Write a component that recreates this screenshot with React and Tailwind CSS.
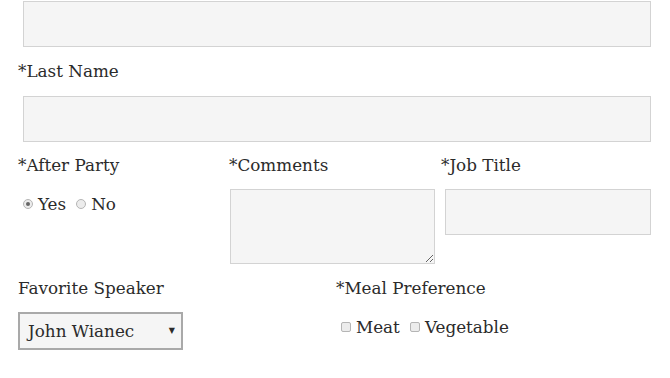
import React from 'react';

const inputCls = 'block h-[46px] bg-[#f5f5f5] border border-[#d3d3d3] outline-none';

function Radio({ checked }) {
  return (
    <span className="inline-flex items-center justify-center w-[10px] h-[10px] rounded-full border border-[#b5b5b5] bg-[#ececec]">
      {checked && <span className="w-[4px] h-[4px] rounded-full bg-[#666]" />}
    </span>
  );
}

function Check() {
  return <span className="inline-block w-[10px] h-[10px] rounded-[2px] border border-[#b5b5b5] bg-[#ececec]" />;
}

export default function App() {
  return (
    <div className="w-[670px] h-[378px] bg-white text-[#2b2b2b] text-[16.8px] leading-[20px] overflow-hidden" style={{ fontFamily: '"DejaVu Serif", serif' }}>
      <div className="pl-[18px] pr-[19px]">
        <input className={`${inputCls} ml-[5px] mt-[1px] w-[628px]`} />
        <div className="mt-[14px] h-[20px]">*Last Name</div>
        <input className={`${inputCls} ml-[5px] mt-[15px] w-[628px] h-[45px]`} />

        <div className="flex mt-[13px]">
          <div className="w-[211px]">
            <div className="h-[20px]">*After Party</div>
            <div className="flex items-center mt-[19px] ml-[5px] h-[20px]">
              <Radio checked />
              <span className="ml-[5px]">Yes</span>
              <span className="ml-[10px] flex items-center"><Radio /></span>
              <span className="ml-[5px]">No</span>
            </div>
          </div>
          <div className="w-[212px]">
            <div className="h-[20px]">*Comments</div>
            <textarea className="block mt-[14px] ml-[1px] w-[205px] h-[75px] bg-[#f5f5f5] border border-[#d3d3d3] outline-none resize" />
          </div>
          <div className="flex-1">
            <div className="h-[20px]">*Job Title</div>
            <input className={`${inputCls} mt-[14px] ml-[4px] w-[206px]`} />
          </div>
        </div>

        <div className="flex mt-[14px]">
          <div className="w-[318px]">
            <div className="h-[20px]">Favorite Speaker</div>
            <div className="mt-[14px] w-[165px] h-[38px] border-2 border-[#a9a9a9] bg-[#f5f5f5] flex items-center justify-between pl-[8px] pr-[6px]">
              <span>John Wianec</span>
              <span className="text-[8px] leading-none">▼</span>
            </div>
          </div>
          <div className="flex-1">
            <div className="h-[20px]">*Meal Preference</div>
            <div className="flex items-center mt-[19px] ml-[5px] h-[20px]">
              <Check />
              <span className="ml-[5px]">Meat</span>
              <span className="ml-[10px] flex items-center"><Check /></span>
              <span className="ml-[5px]">Vegetable</span>
            </div>
          </div>
        </div>
      </div>
    </div>
  );
}
